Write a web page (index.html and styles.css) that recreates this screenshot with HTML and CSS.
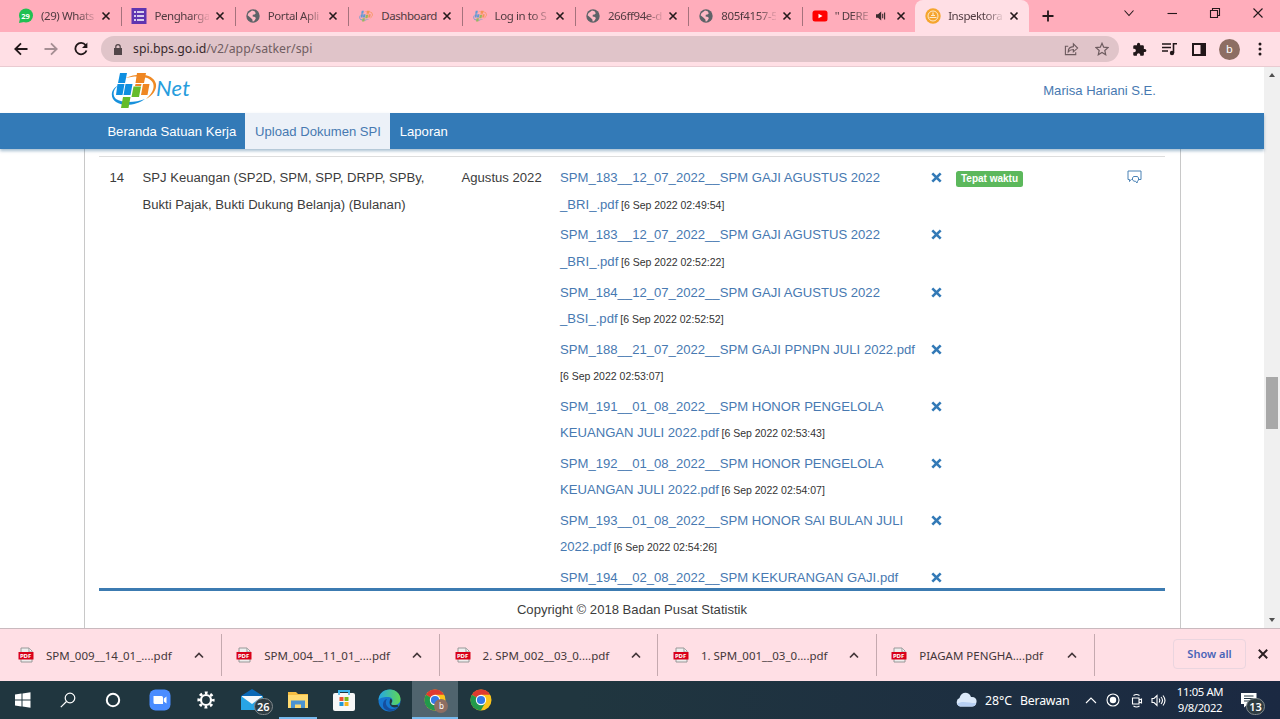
FILE: index.html
```html
<!DOCTYPE html>
<html lang="id">
<head>
<meta charset="utf-8">
<title>Inspektorat</title>
<link rel="stylesheet" href="styles.css">
</head>
<body>
<svg class="defs" aria-hidden="true">
  <symbol id="close" viewBox="0 0 10 10"><path d="M1.5 1.5 8.5 8.5M8.5 1.5 1.5 8.5" stroke="currentColor" stroke-width="1.6" fill="none"/></symbol>
  <symbol id="globe" viewBox="0 0 14 14"><circle cx="7" cy="7" r="6.7" fill="#5f6368"/><path d="M6 1.6 8.6 2.2 9.8 4.2 8.6 5.6 6.8 5.8 6.6 7.6 9.2 8 9.8 9.4 8 12.3 6.6 12.6 6.4 10.4 4.6 8.8 1.6 6.2 2.4 4.2Z" fill="#ffb9c5"/></symbol>
  <symbol id="bps" viewBox="0 0 46 38"><path d="M8 14C-1 18-1 27 5 31c8 5 21 3 29-3C24 32 11 32 5 28 1 24 2 18 8 14Z" fill="#1791dc"/><path d="M14 7C28 1 43 3 45 13c1 6-4 12-10 15 6-5 9-11 7-16C39 5 26 4 14 7Z" fill="#f08a25"/><path d="M9 2h7l-2 10H7ZM6.500 13h7l-2 11H5ZM14.500 13h7l-2 11h-7Z" fill="#0f8fe0"/><path d="M26 2h9l-2 10h-8.500ZM24.500 13h6l-.5 2h-6ZM32 13h6.500l-2 11H30Z" fill="#ef8622"/><path d="M22.500 15.500h7.500L28 26h-7.500ZM12 26h7.500l-2 11h-7.500Z" fill="#65bc2b"/></symbol>
  <symbol id="pdf" viewBox="0 0 16 16"><path d="M3 1h8l3 3v11H3Z" fill="#eee" stroke="#989898"/><path d="M11 1v4h3" fill="#fff" stroke="#989898"/><path d="M.5 5h15v7.5H.5Z" fill="#d90019"/><text x="1.9" y="11" class="pdf-label">PDF</text></symbol>
  <symbol id="up" viewBox="0 0 10 7"><path d="m1 5.5 4-4 4 4" fill="none" stroke="currentColor" stroke-width="1.7"/></symbol>
  <symbol id="chrome" viewBox="0 0 22 22"><circle cx="11" cy="11" r="10.5" fill="#fbc51b"/><path d="M11 11 1.9 5.7A10.5 10.5 0 0 1 20.1 5.8H11Z" fill="#df3b30"/><path d="M1.9 5.7A10.5 10.5 0 0 0 10.8 21.5L15.5 13.6 11 11Z" fill="#22994b"/><circle cx="11" cy="11" r="5.2" fill="#fff"/><circle cx="11" cy="11" r="4.1" fill="#3279e8"/></symbol>
  <symbol id="remove" viewBox="0 0 10 10"><path d="M1.2 1.2 8.8 8.8M8.8 1.2 1.2 8.8" stroke="#337ab7" stroke-width="2.4"/></symbol>
</svg>

<div class="tabs">
  <div class="tab"><svg class="fav" viewBox="0 0 16 16"><circle cx="8" cy="7.5" r="7" fill="#20c052"/><path d="m1 15 1-5 4 4Z" fill="#20c052"/><text x="3.2" y="10.7" class="fav-count">29</text></svg><span class="tab-title">(29) Whats</span><svg class="x"><use href="#close"/></svg></div>
  <div class="tab"><svg class="fav" viewBox="0 0 16 16"><path d="M.5 0h15v16H.5Z" fill="#5f35b0"/><path d="M3 4h2M6 4h7M3 8h2M6 8h7M3 12h2M6 12h7" stroke="#fff" stroke-width="1.7"/></svg><span class="tab-title">Pengharga</span><svg class="x"><use href="#close"/></svg></div>
  <div class="tab"><svg class="fav globe"><use href="#globe"/></svg><span class="tab-title">Portal Apli</span><svg class="x"><use href="#close"/></svg></div>
  <div class="tab"><svg class="fav bps"><use href="#bps"/></svg><span class="tab-title nofade">Dashboard</span><svg class="x"><use href="#close"/></svg></div>
  <div class="tab"><svg class="fav bps"><use href="#bps"/></svg><span class="tab-title">Log in to S</span><svg class="x"><use href="#close"/></svg></div>
  <div class="tab"><svg class="fav globe"><use href="#globe"/></svg><span class="tab-title">266ff94e-d</span><svg class="x"><use href="#close"/></svg></div>
  <div class="tab"><svg class="fav globe"><use href="#globe"/></svg><span class="tab-title">805f4157-5</span><svg class="x"><use href="#close"/></svg></div>
  <div class="tab plain"><svg class="fav" viewBox="0 0 16 16"><rect x=".5" y="2.5" width="15" height="11" rx="2.5" fill="#f00"/><path d="m6.5 5.7 4 2.3-4 2.3Z" fill="#fff"/></svg><span class="tab-title short">'' DERE</span><svg class="sound" viewBox="0 0 10 10"><path d="M0 3.2h2L5.200.5v9L2 6.800H0Z" fill="#3a2b2e"/><path d="M6.700 2.800v4.400M8.600 1.500v7" stroke="#3a2b2e" stroke-width="1.100" fill="none"/></svg><svg class="x"><use href="#close"/></svg></div>
  <div class="tab active"><svg class="fav" viewBox="0 0 16 16"><circle cx="8" cy="8" r="7.7" fill="#f5a52d"/><circle cx="8" cy="8" r="5" fill="none" stroke="#ffe9c8" stroke-width="1"/><path d="M4.500 9.500h7M8 4.500v2.500M6 7.500h4" stroke="#ffe9c8" stroke-width="1.200"/></svg><span class="tab-title">Inspektora</span><svg class="x"><use href="#close"/></svg></div>
  <svg class="plus" viewBox="0 0 12 12"><path d="M6 .5v11M.5 6h11" stroke="#24191b" stroke-width="1.8"/></svg>
  <div class="window-controls">
    <svg viewBox="0 0 12 12"><path d="m1.500 3.500 4.500 5 4.500-5"/></svg>
    <svg viewBox="0 0 12 12"><path d="M1.500 6.500h9.500"/></svg>
    <svg viewBox="0 0 12 12"><path d="M1.500 3.500h7v7h-7ZM3.500 3V1.500h7v7H9"/></svg>
    <svg viewBox="0 0 12 12"><path d="m1.500 1.500 9 9M10.500 1.500l-9 9"/></svg>
  </div>
</div>

<div class="toolbar">
  <svg class="arrow" viewBox="0 0 14 14"><path d="M13.500 7H1.500M7 1.300 1.300 7 7 12.700"/></svg>
  <svg class="arrow off" viewBox="0 0 14 14"><path d="M.5 7h12M7 1.300 12.700 7 7 12.700"/></svg>
  <svg class="arrow" viewBox="0 0 14 14"><path d="M11.600 3.100A5.700 5.700 0 1 0 12.500 8.500"/><path d="M13.400.5v5.500H8Z" class="solid"/></svg>
  <div class="address">
    <svg class="lock" viewBox="0 0 8 11"><path d="M0 4h8v7H0Z" fill="#514548"/><path d="M1.800 5V2.800a2.200 2.200 0 0 1 4.400 0V5" fill="none" stroke="#514548" stroke-width="1.200"/></svg>
    <span class="url"><b>spi.bps.go.id</b>/v2/app/satker/spi</span>
    <svg class="share" viewBox="0 0 16 14"><path d="M4.500 4H1.500v9h11v-2.500M4.500 10c0-3.500 2-5.300 5.500-5.500V1.500l4.500 4.500L10 10V7.500C7.500 7.500 6 8 4.500 10Z"/></svg>
    <svg class="star" viewBox="0 0 14 14"><path d="m7 1.300 1.700 3.900 4.300.4-3.200 2.900.9 4.200L7 10.500l-3.700 2.200.9-4.200L1 5.600l4.300-.4Z"/></svg>
  </div>
  <svg class="ext" viewBox="0 0 24 24"><path fill="#211719" d="M20.500 11H19V7a2 2 0 0 0-2-2h-4V3.500a2.500 2.500 0 0 0-5 0V5H4a2 2 0 0 0-2 2v3.800h1.500a2.700 2.700 0 0 1 0 5.400H2V20c0 1.100.9 2 2 2h3.800v-1.500a2.700 2.700 0 0 1 5.400 0V22H17a2 2 0 0 0 2-2v-4h1.500a2.500 2.500 0 0 0 0-5Z"/></svg>
  <svg class="media" viewBox="0 0 16 14"><path d="M1 2h9M1 5.500h9M1 9h6M12.500 11V1.800H16" fill="none" stroke="#211719" stroke-width="1.600"/><circle cx="11" cy="11" r="2.200" fill="#211719"/></svg>
  <svg class="side" viewBox="0 0 14 13"><path d="M1 1h12v11H1Z" fill="none" stroke="#211719" stroke-width="2"/><path d="M8.500 1H13v11H8.500Z" fill="#211719"/></svg>
  <span class="avatar">b</span>
  <svg class="kebab" viewBox="0 0 4 14"><circle cx="2" cy="2" r="1.500"/><circle cx="2" cy="7" r="1.500"/><circle cx="2" cy="12" r="1.500"/></svg>
</div>

<div class="viewport">
  <div class="page">
    <header>
      <div class="brand"><svg class="logo"><use href="#bps"/></svg><span class="net">Net</span></div>
      <a class="user">Marisa Hariani S.E.</a>
    </header>
    <nav><a>Beranda Satuan Kerja</a><a class="current">Upload Dokumen SPI</a><a>Laporan</a></nav>
    <main>
      <div class="row">
        <span class="no">14</span>
        <span class="doc">SPJ Keuangan (SP2D, SPM, SPP, DRPP, SPBy,<br>Bukti Pajak, Bukti Dukung Belanja) (Bulanan)</span>
        <span class="month">Agustus 2022</span>
        <div class="files">
          <div class="file"><p><a>SPM_183__12_07_2022__SPM GAJI AGUSTUS 2022<br>_BRI_.pdf</a> <small>[6 Sep 2022 02:49:54]</small></p><svg><use href="#remove"/></svg></div>
          <div class="file"><p><a>SPM_183__12_07_2022__SPM GAJI AGUSTUS 2022<br>_BRI_.pdf</a> <small>[6 Sep 2022 02:52:22]</small></p><svg><use href="#remove"/></svg></div>
          <div class="file"><p><a>SPM_184__12_07_2022__SPM GAJI AGUSTUS 2022<br>_BSI_.pdf</a> <small>[6 Sep 2022 02:52:52]</small></p><svg><use href="#remove"/></svg></div>
          <div class="file"><p><a>SPM_188__21_07_2022__SPM GAJI PPNPN JULI 2022.pdf</a><br><small class="first">[6 Sep 2022 02:53:07]</small></p><svg><use href="#remove"/></svg></div>
          <div class="file"><p><a>SPM_191__01_08_2022__SPM HONOR PENGELOLA<br>KEUANGAN JULI 2022.pdf</a> <small>[6 Sep 2022 02:53:43]</small></p><svg><use href="#remove"/></svg></div>
          <div class="file"><p><a>SPM_192__01_08_2022__SPM HONOR PENGELOLA<br>KEUANGAN JULI 2022.pdf</a> <small>[6 Sep 2022 02:54:07]</small></p><svg><use href="#remove"/></svg></div>
          <div class="file"><p><a>SPM_193__01_08_2022__SPM HONOR SAI BULAN JULI<br>2022.pdf</a> <small>[6 Sep 2022 02:54:26]</small></p><svg><use href="#remove"/></svg></div>
          <div class="file"><p><a>SPM_194__02_08_2022__SPM KEKURANGAN GAJI.pdf</a></p><svg><use href="#remove"/></svg></div>
        </div>
        <span class="status">Tepat waktu</span>
        <svg class="chat" viewBox="0 0 15 14"><path d="M4.500 9.500H4l-1.500 2v-2H1V1h13v8.500h-2.500"/><path d="M6.500 6.500h4l1 1.500v2l-1 1.200-.5 1.800-1.500-1.800H7L5.500 10V8Z"/></svg>
      </div>
      <footer>Copyright © 2018 Badan Pusat Statistik</footer>
    </main>
  </div>
  <div class="scrollbar"><i class="tri-up"></i><span class="thumb"></span><i class="tri-down"></i></div>
</div>

<div class="downloads">
  <div class="dl"><svg class="pdf"><use href="#pdf"/></svg><span>SPM_009__14_01_....pdf</span><svg class="chev"><use href="#up"/></svg></div>
  <div class="dl"><svg class="pdf"><use href="#pdf"/></svg><span>SPM_004__11_01_....pdf</span><svg class="chev"><use href="#up"/></svg></div>
  <div class="dl"><svg class="pdf"><use href="#pdf"/></svg><span>2. SPM_002__03_0....pdf</span><svg class="chev"><use href="#up"/></svg></div>
  <div class="dl"><svg class="pdf"><use href="#pdf"/></svg><span>1. SPM_001__03_0....pdf</span><svg class="chev"><use href="#up"/></svg></div>
  <div class="dl"><svg class="pdf"><use href="#pdf"/></svg><span>PIAGAM PENGHA....pdf</span><svg class="chev"><use href="#up"/></svg></div>
  <a class="show-all">Show all</a>
  <svg class="dl-close"><use href="#close"/></svg>
</div>

<div class="taskbar">
  <div class="slot"><svg width="16" height="16" viewBox="0 0 16 16"><path d="M0 2.400 6.500 1.500v6H0ZM7.500 1.400 15.500.2v7.300h-8ZM0 8.500h6.500v6L0 13.600ZM7.500 8.500h8v7.300l-8-1.200Z" fill="#fff"/></svg></div>
  <div class="slot"><svg width="16" height="16" viewBox="0 0 16 16" class="line"><circle cx="10" cy="6" r="4.800"/><path d="M6.500 9.500.8 15.200"/></svg></div>
  <div class="slot"><svg width="16" height="16" viewBox="0 0 16 16" class="line thick"><circle cx="8" cy="8" r="6.200"/></svg></div>
  <div class="slot wide"><svg width="22" height="22" viewBox="0 0 22 22"><rect x=".5" y=".5" width="21" height="21" rx="6" fill="#4a8cff"/><path d="M4.500 7h8q1.500 0 1.500 1.500V15H6q-1.500 0-1.500-1.500ZM14.800 9.500 17.500 7.500v7l-2.700-2Z" fill="#fff"/></svg></div>
  <div class="slot wide"><svg width="18" height="18" viewBox="0 0 18 18"><circle cx="9" cy="9" r="5" fill="none" stroke="#fff" stroke-width="2.200"/><circle cx="9" cy="9" r="7.200" fill="none" stroke="#fff" stroke-width="2.800" stroke-dasharray="2.800 2.855" stroke-dashoffset="1.400"/></svg></div>
  <div class="slot wide"><svg width="24" height="22" viewBox="0 0 24 22"><path d="M1 7 12 0l11 7v14H1Z" fill="#0a68b6"/><path d="M2 7h20v8H2Z" fill="#f4f8fb"/><path d="m1 7 11 8 11-8v14H1Z" fill="#28a5e5"/></svg><span class="badge mail">26</span></div>
  <div class="slot wide explorer"><svg width="22" height="18" viewBox="0 0 22 18"><path d="M1 1h8l2 2h10v14H1Z" fill="#f5bd42"/><path d="M1 4h20v13H1Z" fill="#ffda70"/><path d="M4 9.500h14V17h-4v-3.500H8V17H4Z" fill="#4b93d1"/></svg></div>
  <div class="slot wide"><svg width="22" height="23" viewBox="0 0 22 23"><path d="M6 7V2h10v5" fill="none" stroke="#3bb4ee" stroke-width="2"/><rect y="4" width="22" height="18" rx="2" fill="#f7f7f7"/><path d="M6 6V2h10v4" fill="none" stroke="#3bb4ee" stroke-width="1.500"/><path d="M6.500 8h4v4h-4Z" fill="#ed5131"/><path d="M11.500 8h4v4h-4Z" fill="#7bb91c"/><path d="M6.500 13h4v4h-4Z" fill="#2097d5"/><path d="M11.500 13h4v4h-4Z" fill="#f6b51b"/></svg></div>
  <div class="slot wide"><svg width="23" height="23" viewBox="0 0 23 23"><defs><linearGradient id="eg"><stop stop-color="#24a7e5"/><stop offset="1" stop-color="#60d754"/></linearGradient></defs><circle cx="11.500" cy="11.500" r="11" fill="#1677cf"/><path d="M.5 11C1 4 6 .5 12 .5S22.500 5 22.500 10c0 4-3 6-7 6-2 0-3-1-2-2 2-2 1-6-3-6S3 8 .5 11Z" fill="url(#eg)"/><path d="M9 10c-3 4 0 9 5 10 3 .4 5-1 7-3-4 8-17 6-16-2 .3-3 2-4.500 4-5Z" fill="#154e9e"/><path d="M12.500 9.500c2 1 2 3 1 4.500-1 1.500 0 2 2 2h4l1 1.500c-6 3-11-1-8-8Z" fill="#223740"/></svg></div>
  <div class="slot wide running"><svg width="22" height="22"><use href="#chrome"/></svg><span class="badge who">b</span></div>
  <div class="slot wide"><svg width="22" height="22"><use href="#chrome"/></svg></div>
  <div class="tray">
    <svg class="cloud" viewBox="0 0 22 15"><path d="M5 14.500A4.500 4.500 0 0 1 4.500 6C6-.5 14-1 16 5c4-.5 6 2 5.500 5-.3 3-2 4.500-4.500 4.500Z" fill="#dbe9fa"/><path d="M2 12c5-4 11-1 19-1-.6 2.500-2 3.500-4 3.500H5Z" fill="#b7cff2"/></svg>
    <span class="temp">28°C</span><span class="sky">Berawan</span>
    <svg class="t-up" viewBox="0 0 12 8"><path d="m1 7 5-5 5 5"/></svg>
    <svg class="t-rec" viewBox="0 0 14 14"><circle cx="7" cy="7" r="6"/><circle cx="7" cy="7" r="3.200" class="dot"/></svg>
    <svg class="t-cam" viewBox="0 0 12 15"><path d="M1.500 5h6.500v6H1.500ZM8 7l2.500-1v4L8 9M2.500 2.500q3-2 6 0M2.500 13q3 2 6 0"/></svg>
    <svg class="t-vol" viewBox="0 0 15 13"><path d="M1 4.500h2L6 1.500v10l-3-3H1ZM8 4.500q1.500 2 0 4M10 3q3 3.500 0 7M12 1.500q4 5 0 10"/></svg>
    <div class="clock"><span>11:05 AM</span><span>9/8/2022</span></div>
    <div class="notes"><svg width="16" height="15" viewBox="0 0 16 15"><path d="M0 0h15.500v11H7l-4 3.500V11H0Z" fill="#fff"/><path d="M3 3h9.500M3 5.500h9.500M3 8h7" stroke="#213442"/></svg><span class="badge count">13</span></div>
  </div>
</div>
</body>
</html>
```
FILE: styles.css
```css
* { box-sizing: border-box; }
body { margin: 0; width: 1280px; height: 719px; overflow: hidden; display: flex; flex-direction: column; background: #fff; font-family: "Liberation Sans", Arial, sans-serif; }
svg { display: block; flex: none; }
.defs { position: absolute; width: 0; height: 0; }
.tabs, .toolbar, .downloads, .taskbar { font-family: "Noto Sans", "Open Sans", sans-serif; }

.tabs { display: flex; height: 32px; flex: none; background: #ffadbb; padding-left: 8px; align-items: center; }
.tab { position: relative; width: 113.4px; height: 32px; padding: 0 10px; display: flex; align-items: center; flex: none; color: #503b40; }
.tab::after { content: ""; position: absolute; right: -1px; top: 7px; width: 1px; height: 19px; background: #a4727c; }
.tab.plain::after, .tab.active::after { display: none; }
.tab.active { background: #ffdfe5; border-radius: 8px 8px 0 0; }
.fav { width: 16px; height: 16px; margin-right: 7px; }
.fav.globe { padding: 1px; }
.fav.bps { opacity: .65; padding: 1px; }
.fav-count { font: bold 7.5px "Noto Sans", sans-serif; fill: #fff; }
.tab-title { width: 55px; white-space: nowrap; font-size: 11.5px; letter-spacing: -.42px; line-height: 20px; -webkit-mask-image: linear-gradient(to right, #000 36px, rgba(0,0,0,.15) 54px); mask-image: linear-gradient(to right, #000 36px, rgba(0,0,0,.15) 54px); }
.tab-title.nofade { -webkit-mask-image: none; mask-image: none; }
.tab-title.short { width: 35px; -webkit-mask-image: linear-gradient(to right, #000 16px, rgba(0,0,0,.2) 35px); mask-image: linear-gradient(to right, #000 16px, rgba(0,0,0,.2) 35px); }
.sound { width: 10px; height: 10px; margin: 0 2px 0 8px; }
.x { width: 10px; height: 10px; margin-left: 6px; color: #24191b; }
.sound + .x { margin-left: 8px; }
.plus { width: 12px; height: 12px; margin-left: 13.5px; }
.window-controls { display: flex; gap: 31px; margin: -6px 0 0 68.5px; }
.window-controls svg { width: 12px; height: 12px; fill: none; stroke: #24191b; stroke-width: 1.1; }

.toolbar { height: 35px; flex: none; background: #ffdfe5; display: flex; align-items: center; padding-left: 14px; border-bottom: 1px solid #e9cbd1; }
.arrow { width: 14px; height: 14px; margin-right: 16px; fill: none; stroke: #211719; stroke-width: 1.8; }
.arrow:nth-child(3) { margin-right: 13px; }
.arrow.off { stroke: #a58e93; }
.arrow .solid { fill: #211719; stroke: none; }
.address { width: 1018px; height: 26px; border-radius: 13px; background: #e0c4c9; display: flex; align-items: center; padding-left: 13px; }
.lock { width: 8px; height: 11px; }
.url { margin-left: 11px; flex: 1; font-size: 12.3px; color: #705d61; margin-top: -1px; }
.url b { font-weight: normal; color: #38292c; }
.share { width: 15px; height: 14px; margin-right: 16px; }
.star { width: 14px; height: 14px; margin-right: 10px; }
.share, .star { fill: none; stroke: #6d5b5f; stroke-width: 1.2; }
.ext { width: 15px; height: 15px; margin-left: 13px; }
.media { width: 16px; height: 14px; margin-left: 14px; }
.side { width: 14px; height: 13px; margin-left: 15px; }
.avatar { width: 21px; height: 21px; border-radius: 50%; background: #8d6e63; color: #fff; font-size: 11px; line-height: 20px; text-align: center; margin-left: 13px; }
.kebab { width: 4px; height: 14px; margin-left: 18px; fill: #211719; }

.viewport { display: flex; height: 561px; flex: none; }
.page { width: 1264px; display: flex; flex-direction: column; }
header { height: 46px; display: flex; justify-content: space-between; align-items: center; padding: 0 108px 0 111px; }
.brand { display: flex; align-items: center; }
.logo { width: 46px; height: 38px; }
.net { font: italic 22px "Lato", sans-serif; letter-spacing: .3px; line-height: 24px; color: #279ddd; margin: -4px 0 0 -1px; }
.user, .file a { color: #4779b1; }
.user { font-size: 13.1px; }
nav { position: relative; height: 36px; flex: none; background: #337ab7; display: flex; padding-left: 98px; box-shadow: 0 2px 3px rgba(0,70,120,.35); }
nav a { color: #fff; font-size: 13.1px; line-height: 38px; padding: 0 9.4px; }
nav a:first-child { padding-right: 8.8px; }
nav .current { background: #ecf1f8; color: #4779b1; padding-left: 10px; }
main { flex: 1; min-height: 0; width: 1097px; margin-left: 84px; padding: 7px 15px 0 14px; border: solid #c8c8c8; border-width: 0 1px; display: flex; flex-direction: column; }
.row { height: 432px; overflow: hidden; flex: none; border-top: 1px solid #ddd; padding: 8.4px 0 0 10.5px; display: grid; grid-template-columns: 33px 319px 98.5px 396px 171px 20px; align-items: start; font-size: 13.12px; line-height: 26.3px; color: #3c3c3c; white-space: nowrap; }
.file { height: 57.1px; display: flex; }
.file p { margin: 0; width: 370.5px; }
.file small { font-size: 10.5px; color: #333; margin-left: -1px; }
.file small.first { margin-left: 0; }
.file svg { width: 11px; height: 11px; margin-top: 7px; }
.status { justify-self: start; margin-top: 6px; height: 16px; width: 67px; border-radius: 2.5px; background: #5cb85c; color: #fff; font-weight: bold; font-size: 10px; line-height: 16px; text-align: center; }
.chat { width: 15px; height: 14px; margin-top: 5px; fill: none; stroke: #4a82b5; }
footer { border-top: 3px solid #3c7bb1; height: 40px; font-size: 13.1px; text-align: center; color: #3c3c3c; line-height: 37px; }
.scrollbar { width: 16px; background: #f0f0f0; display: flex; flex-direction: column; align-items: center; justify-content: space-between; padding: 6px 1px 6px 0; }
.tri-up, .tri-down { border: solid transparent; border-width: 0 3.5px; }
.tri-up { border-bottom: 4px solid #505050; }
.tri-down { border-top: 4px solid #505050; }
.thumb { width: 12px; height: 52px; background: #a8a8a8; margin-top: 110px; }

.downloads { height: 53px; flex: none; background: #ffdfe5; border-top: 1px solid #c9b9be; display: flex; align-items: center; padding-left: 3.5px; }
.dl { width: 218.3px; height: 42px; border-right: 1px solid #c5a9af; display: flex; align-items: center; padding-left: 14.5px; flex: none; font-size: 11.5px; color: #44373a; }
.dl span { width: 148px; margin-left: 12px; white-space: nowrap; }
.dl .pdf { width: 16px; height: 16px; }
.pdf-label { font: bold 6px "Noto Sans", sans-serif; fill: #fff; }
.chev { width: 10px; height: 7px; color: #44373a; }
.show-all { width: 73px; height: 30px; margin: -2px 0 0 78px; border: 1px solid #ead5df; border-radius: 4px; font-size: 11px; font-weight: 600; line-height: 27px; text-align: center; color: #4a64b8; }
.dl-close { width: 12px; height: 12px; margin: -2px 0 0 11px; color: #2a1e21; }

.taskbar { height: 38px; flex: none; display: flex; background: linear-gradient(to right, #20363f, #20363f 45%, #1b2942); color: #fff; }
.slot { position: relative; width: 45px; display: flex; align-items: center; justify-content: center; flex: none; }
.slot:nth-child(4) { margin-left: 2px; }
.slot.wide { width: 45.9px; }
.line { fill: none; stroke: #fff; stroke-width: 1.2; }
.thick { stroke-width: 2; }
.explorer::after, .running::after { content: ""; position: absolute; bottom: 0; left: 4px; right: 4px; height: 2px; background: #76b9ed; }
.running { background: #50646e; }
.running::after { left: 0; right: 0; }
.badge { position: absolute; border-radius: 50%; text-align: center; }
.mail, .count { width: 19px; height: 17px; font-size: 11px; line-height: 15px; font-weight: 600; background: #2e3c42; border: 1px solid #81898d; border-radius: 9px; }
.mail { left: 25px; top: 17px; }
.who { width: 14px; height: 14px; left: 22px; top: 18px; background: #8d6e63; font-size: 8px; line-height: 13px; }
.tray { margin-left: auto; display: flex; align-items: center; padding-right: 23px; font-size: 12.3px; }
.cloud { width: 22px; height: 15px; margin-top: -1px; }
.temp { width: 35px; margin-left: 8px; }
.sky { width: 50px; letter-spacing: -.2px; }
.t-up { width: 12px; height: 8px; margin-left: 15px; }
.t-rec { width: 14px; height: 14px; margin-left: 9px; }
.t-cam { width: 12px; height: 15px; margin-left: 11px; }
.t-vol { width: 15px; height: 13px; margin-left: 8px; }
.t-up, .t-rec, .t-cam, .t-vol { fill: none; stroke: #fff; stroke-width: 1.1; }
.dot { fill: #fff; stroke: none; }
.clock { width: 46px; margin-left: 11px; display: flex; flex-direction: column; align-items: center; font-size: 11.3px; line-height: 16.5px; letter-spacing: -.35px; white-space: nowrap; }
.notes { position: relative; margin-left: 18px; }
.count { left: 5px; top: 5px; }
```
